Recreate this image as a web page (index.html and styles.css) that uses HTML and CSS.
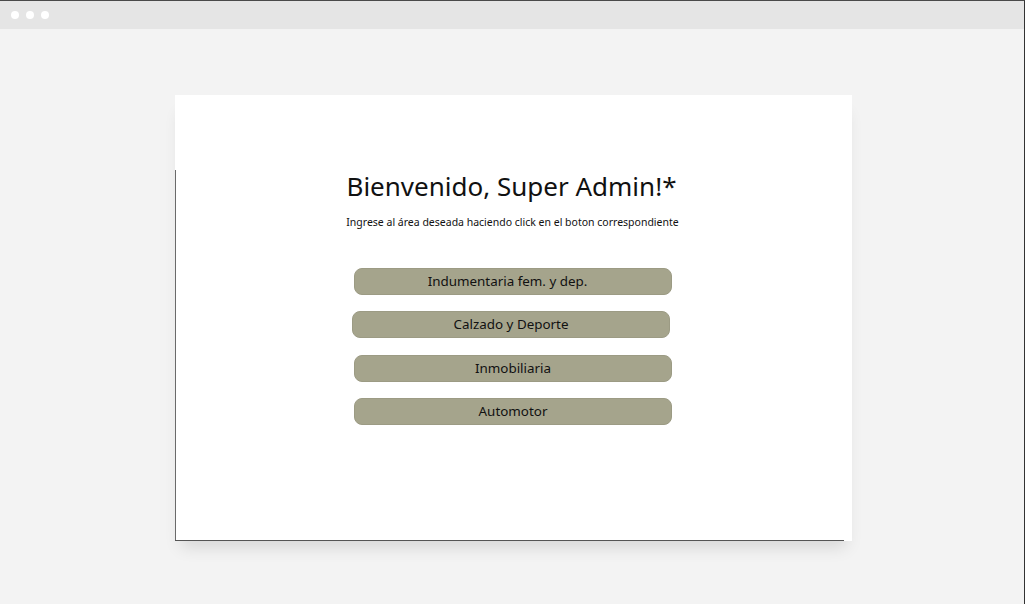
FILE: index.html
```html
<!DOCTYPE html>
<html lang="es">
<head>
<meta charset="utf-8">
<title>Bienvenido</title>
<link rel="stylesheet" href="styles.css">
</head>
<body>
<div class="window">
  <div class="titlebar">
    <span class="dot"></span><span class="dot"></span><span class="dot"></span>
  </div>
  <div class="stage">
    <main class="card">
      <h1 class="title">Bienvenido, Super Admin!*</h1>
      <p class="subtitle">Ingrese al área deseada haciendo click en el boton correspondiente</p>
      <div class="buttons">
        <button class="area-btn first">Indumentaria fem. y dep.</button>
        <button class="area-btn shift">Calzado y Deporte</button>
        <button class="area-btn">Inmobiliaria</button>
        <button class="area-btn">Automotor</button>
      </div>
    </main>
  </div>
</div>
</body>
</html>
```
FILE: styles.css
```css
* { box-sizing: border-box; }
html, body { margin: 0; padding: 0; }
body {
  width: 1025px;
  height: 604px;
  overflow: hidden;
  background: #f3f3f3;
  font-family: "Noto Sans", "Open Sans", sans-serif;
}
.window {
  width: 1025px;
  height: 604px;
  border-top: 1px solid #4a4a4a;
  border-right: 1px solid #333;
  display: flex;
  flex-direction: column;
}
.titlebar {
  height: 28px;
  background: #e5e5e5;
  display: flex;
  align-items: center;
  gap: 7px;
  padding-left: 11px;
  padding-bottom: 1px;
}
.dot {
  width: 8px;
  height: 8px;
  border-radius: 50%;
  background: #fff;
}
.stage {
  flex: 1;
  padding: 66px 0 0 175px;
}
.card {
  position: relative;
  width: 677px;
  height: 446px;
  background: #fff;
  box-shadow: 0 12px 16px -6px rgba(0,0,0,0.12);
  display: flex;
  flex-direction: column;
  align-items: center;
  padding-top: 73px;
}
.card::before {
  content: "";
  position: absolute;
  left: 0;
  top: 75px;
  bottom: 0;
  width: 1px;
  background: #6a6a6a;
}
.card::after {
  content: "";
  position: absolute;
  left: 0;
  bottom: 0;
  width: 669px;
  height: 1px;
  background: #555;
}
.title {
  margin: 0;
  font-weight: 400;
  font-size: 26px;
  line-height: 36px;
  color: #111;
  padding-right: 4px;
}
.subtitle {
  margin: 10px 0 0;
  font-size: 10.5px;
  line-height: 16px;
  color: #111;
  padding-right: 2px;
}
.buttons {
  display: flex;
  flex-direction: column;
  gap: 16px;
  margin-top: 38px;
  padding-right: 1px;
}
.area-btn {
  width: 318px;
  height: 27px;
  border: 1px solid #9c9b84;
  border-radius: 8px;
  background: #a5a48c;
  font-family: "Noto Sans", "Open Sans", sans-serif;
  font-size: 13.4px;
  color: #111;
  padding: 0;
  line-height: 25px;
}
.area-btn.first {
  padding-right: 11px;
}
.area-btn.shift {
  margin-left: -2px;
  margin-bottom: 1px;
}
```
